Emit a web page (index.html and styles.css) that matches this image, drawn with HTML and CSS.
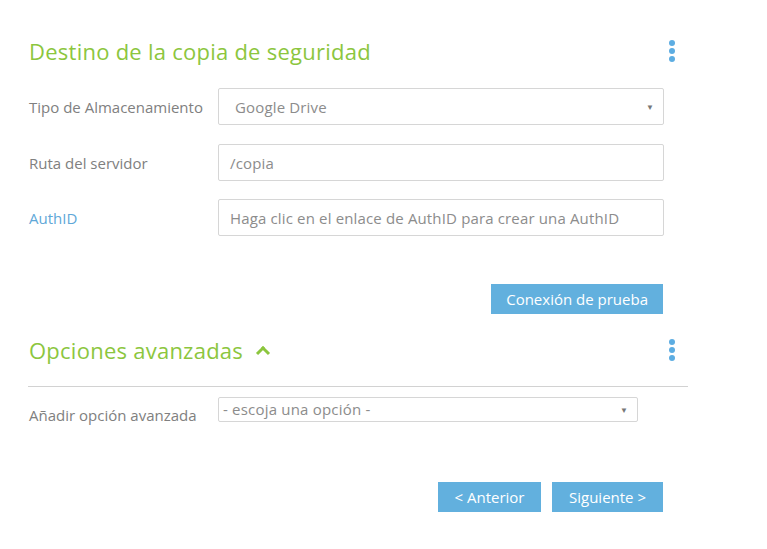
FILE: index.html
```html
<!DOCTYPE html>
<html lang="es">
	<head>
		<meta charset="UTF-8">
		<meta name="viewport" content="width=device-width, initial-scale=1">
		<link rel="stylesheet" href="styles.css">
	</head>
	<body>
		<div class="page">
			<!-- destino -->
			<div class="sectionHead first">
				<h2 class="sectionTitle">Destino de la copia de seguridad</h2>
				<span class="kebab"><i></i><i></i><i></i></span>
			</div>

			<div class="formRow">
				<label class="fieldLabel">Tipo de Almacenamiento</label>
				<div class="field selectBox">
					<span class="selectText">Google Drive</span>
					<span class="arrow">&#9660;</span>
				</div>
			</div>
			<div class="formRow">
				<label class="fieldLabel">Ruta del servidor</label>
				<div class="field"><span class="inputText">/copia</span></div>
			</div>
			<div class="formRow">
				<label class="fieldLabel link">AuthID</label>
				<div class="field"><span class="inputText">Haga clic en el enlace de AuthID para crear una AuthID</span></div>
			</div>

			<div class="buttonRow testRow">
				<button class="buttonBlue">Conexión de prueba</button>
			</div>

			<!-- avanzadas -->
			<div class="sectionHead advanced">
				<h2 class="sectionTitle">Opciones avanzadas <span class="chevron"></span></h2>
				<span class="kebab"><i></i><i></i><i></i></span>
			</div>
			<hr class="divider">

			<div class="formRow small">
				<label class="fieldLabel">Añadir opción avanzada</label>
				<div class="smallSelect">
					<span>- escoja una opción -</span>
					<span class="arrow">&#9660;</span>
				</div>
			</div>

			<div class="buttonRow navRow">
				<button class="buttonBlue prev">&lt; Anterior</button>
				<button class="buttonBlue next">Siguiente &gt;</button>
			</div>
		</div>
	</body>
</html>
```

FILE: styles.css
```css
body {
	margin: 0;
	background: #fff;
	font-family: "Open Sans", "Noto Sans", sans-serif;
	color: #808080;
}

.page {
	width: 660px;
	padding: 36px 0 0 29px;
}

/*---------------------------HEADINGS---------------------------*/
.sectionHead {
	display: flex;
	align-items: center;
	justify-content: space-between;
	width: 647px;
}

.sectionTitle {
	margin: 0;
	font-size: 22px;
	font-weight: 400;
	color: #8cc63e;
	line-height: 30px;
	letter-spacing: 0.25px;
}

.chevron {
	display: inline-block;
	width: 7px;
	height: 7px;
	border-left: 3px solid #8cc63e;
	border-top: 3px solid #8cc63e;
	transform: rotate(45deg);
	margin-left: 9px;
	position: relative;
	top: -1px;
}

.kebab {
	display: flex;
	flex-direction: column;
	gap: 2px;
	margin-right: 1px;
}

.kebab i {
	display: block;
	width: 6px;
	height: 6px;
	border-radius: 50%;
	background: #5dade2;
}

.advanced {
	margin-top: 21px;
}

.divider {
	border: none;
	border-top: 1px solid #d2d2d2;
	margin: 21px 0 0 -1px;
	width: 660px;
}

/*---------------------------FORM---------------------------*/
.formRow {
	display: flex;
	align-items: center;
	margin-top: 19px;
}

.first + .formRow {
	margin-top: 22px;
}

.fieldLabel {
	width: 189px;
	font-size: 15px;
}

.fieldLabel.link {
	color: #5fa8d8;
}

.field {
	box-sizing: border-box;
	width: 446px;
	height: 37px;
	border: 1px solid #d6d6d6;
	border-radius: 2px;
	display: flex;
	align-items: center;
	padding: 0 11px;
	font-size: 15px;
	letter-spacing: 0.15px;
	color: #8c8c8c;
}

.formRow + .formRow + .formRow {
	margin-top: 18px;
}

.selectBox {
	padding: 0 9px 0 16px;
	justify-content: space-between;
}

.arrow {
	font-size: 8px;
	color: #777;
}

.small {
	margin-top: 10px;
	align-items: flex-start;
}

.small .fieldLabel {
	padding-top: 8px;
	line-height: 20px;
}

.smallSelect {
	box-sizing: border-box;
	width: 420px;
	height: 25px;
	border: 1px solid #d6d6d6;
	border-radius: 2px;
	display: flex;
	justify-content: space-between;
	align-items: flex-start;
	padding: 0 9px 0 4px;
	font-size: 15px;
	letter-spacing: 0.2px;
	line-height: 22px;
	color: #8c8c8c;
}

.smallSelect .arrow {
	line-height: 24px;
}

/*---------------------------BUTTONS---------------------------*/
.buttonRow {
	display: flex;
	justify-content: flex-end;
	gap: 11px;
	width: 634px;
}

.testRow {
	margin-top: 48px;
}

.navRow {
	margin-top: 57px;
}

.buttonBlue {
	background-color: #62b0de;
	border: none;
	color: #fff;
	font-family: "Open Sans", "Noto Sans", sans-serif;
	font-size: 15px;
	height: 30px;
	padding: 0 15px;
	cursor: pointer;
}

.prev {
	width: 103px;
}

.next {
	width: 111px;
}
```
